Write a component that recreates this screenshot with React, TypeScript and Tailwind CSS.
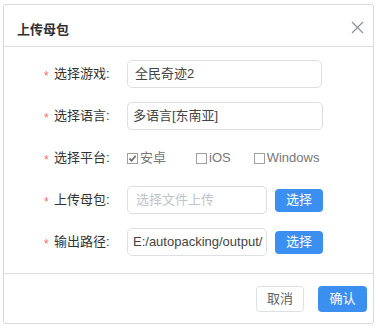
import React from "react";

const FONT = "font-['Liberation_Sans','Noto_Sans_CJK_SC',sans-serif]";

// One form row: red asterisk, label, then the field(s).
function Row({ label, children }: { label: string; children: React.ReactNode }) {
  return (
    <div className="flex h-[28px] items-center pl-[40px]">
      <span className="w-[10px] pt-[3px] text-[12px] leading-none text-[#f56c6c]">*</span>
      <span className="w-[73px] text-[13px] text-[#333]">{label}</span>
      {children}
    </div>
  );
}

function Check({ label, checked }: { label: string; checked?: boolean }) {
  return (
    <span className="flex items-center">
      <span className="flex h-[11px] w-[11px] items-center justify-center border border-[#a0a0a0] bg-white">
        {checked ? (
          <svg width="9" height="9" viewBox="0 0 9 9">
            <path d="M1.5 4.6 L3.6 6.8 L7.6 1.8" fill="none" stroke="#666" strokeWidth="1.6" />
          </svg>
        ) : null}
      </span>
      <span className="ml-[2px] text-[13px] text-[#777]">{label}</span>
    </span>
  );
}

function BlueButton({ children, className = "" }: { children: React.ReactNode; className?: string }) {
  return (
    <button
      type="button"
      className={`flex items-center justify-center rounded-[4px] bg-[#3b8ff0] text-[13px] text-white ${className}`}
    >
      {children}
    </button>
  );
}

export default function App() {
  return (
    <div className={`h-[331px] w-[380px] bg-white pl-[3px] pt-[4px] ${FONT}`}>
      <div className="flex h-[320px] w-[371px] flex-col rounded-[3px] border border-[#d9d9d9]">
        <div className="flex items-start justify-between border-b border-[#dcdfe6] pb-[7px] pl-[13px] pr-[9px] pt-[16px]">
          <span className="text-[13px] font-bold leading-[18px] text-[#303133]">上传母包</span>
          <svg width="13" height="13" viewBox="0 0 13 13" className="mt-[0px]">
            <path d="M1 1 L12 12 M12 1 L1 12" stroke="#909399" strokeWidth="1.3" />
          </svg>
        </div>

        <div className="flex flex-1 flex-col gap-[14px] border-b border-[#dcdfe6] pt-[13px]">
          <Row label="选择游戏:">
            <div className="flex h-[28px] w-[195px] items-center rounded-[5px] border border-[#dcdfe6] pl-[7px] text-[13px] text-[#444]">
              全民奇迹2
            </div>
          </Row>
          <Row label="选择语言:">
            <div className="flex h-[28px] w-[196px] items-center rounded-[5px] border border-[#dcdfe6] pl-[5px] text-[13px] text-[#444]">
              多语言[东南亚]
            </div>
          </Row>
          <Row label="选择平台:">
            <div className="flex items-center">
              <Check label="安卓" checked />
              <span className="ml-[30px]">
                <Check label="iOS" />
              </span>
              <span className="ml-[23px]">
                <Check label="Windows" />
              </span>
            </div>
          </Row>
          <Row label="上传母包:">
            <div className="flex h-[28px] w-[140px] items-center rounded-[5px] border border-[#dcdfe6] pl-[8px] text-[13px] text-[#c0c4cc]">
              选择文件上传
            </div>
            <BlueButton className="ml-[8px] h-[23px] w-[48px]">选择</BlueButton>
          </Row>
          <Row label="输出路径:">
            <div className="flex h-[28px] w-[140px] items-center overflow-hidden whitespace-nowrap rounded-[5px] border border-[#dcdfe6] pl-[5px] text-[13px] text-[#444]">
              E:/autopacking/output/
            </div>
            <BlueButton className="ml-[8px] h-[23px] w-[48px]">选择</BlueButton>
          </Row>
        </div>

        <div className="flex h-[49px] items-start justify-end gap-[14px] pr-[6px] pt-[12px]">
          <button
            type="button"
            className="flex h-[26px] w-[48px] items-center justify-center rounded-[4px] border border-[#dcdfe6] bg-white text-[13px] text-[#606266]"
          >
            取消
          </button>
          <BlueButton className="h-[26px] w-[49px]">确认</BlueButton>
        </div>
      </div>
    </div>
  );
}
